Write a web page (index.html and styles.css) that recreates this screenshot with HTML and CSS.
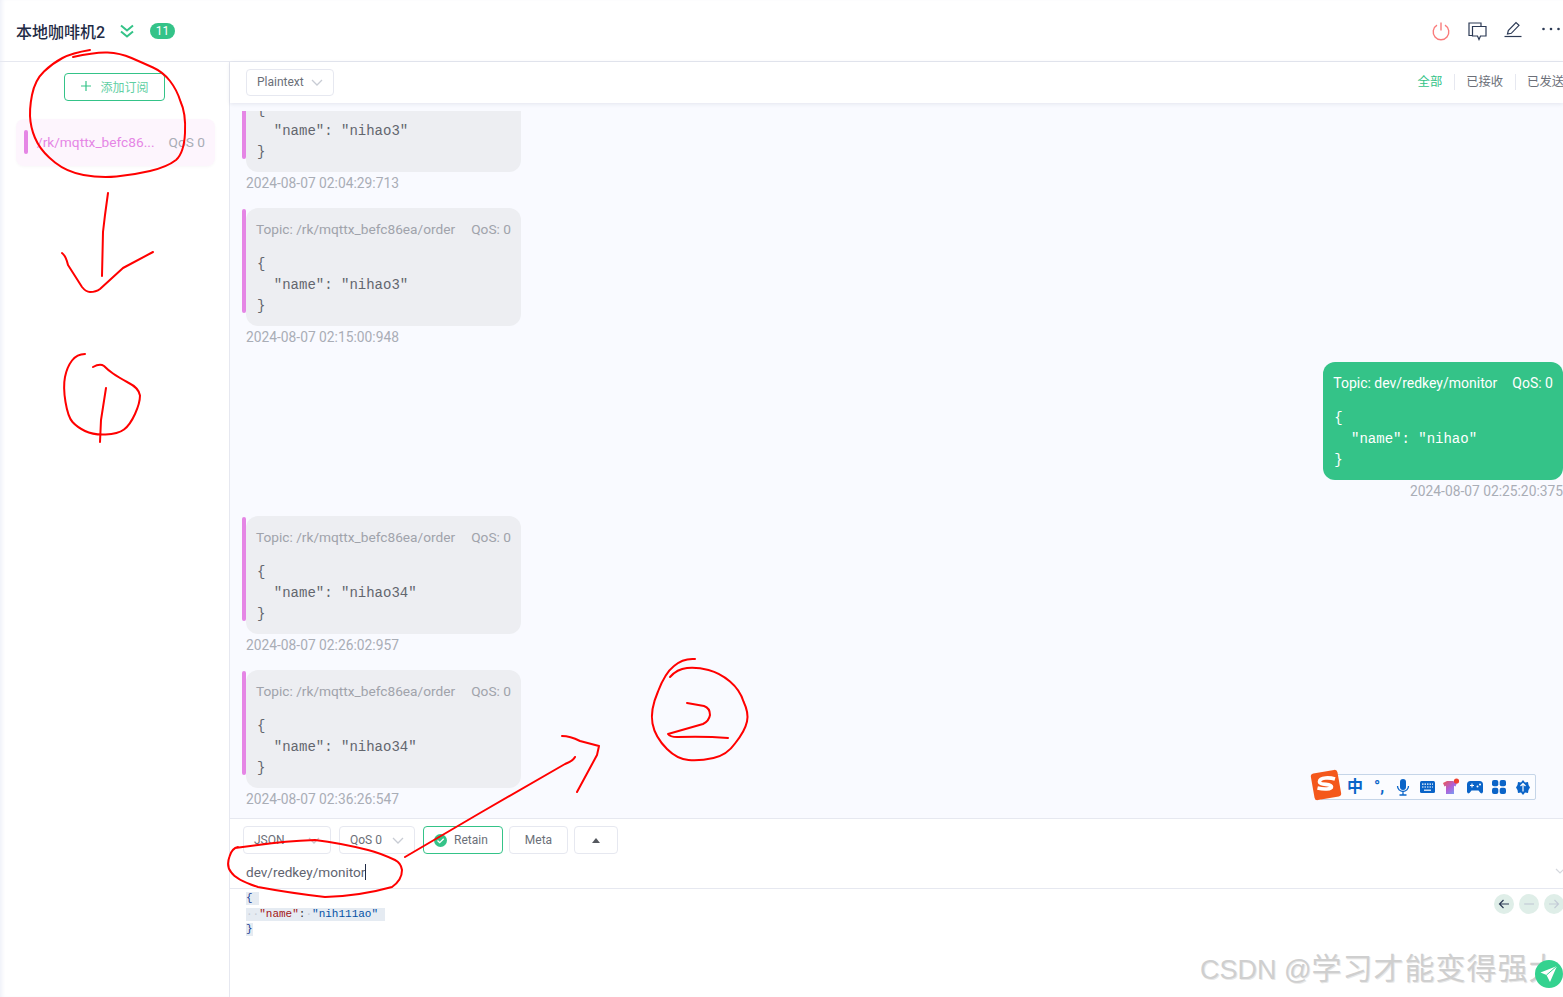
FILE: index.html
```html
<!DOCTYPE html>
<html lang="en">
<head>
    <meta charset="UTF-8">
    <meta name="viewport" content="width=device-width, initial-scale=1.0">
    <title>本地咖啡机2</title>
    <link rel="stylesheet" href="styles.css">
</head>
<body>
    <div class="app">
        <header class="topbar">
            <h1 class="conn-name">本地咖啡机2</h1>
            <svg class="conn-arrows" width="16" height="16" viewBox="0 0 16 16" fill="none" stroke="#34c388" stroke-width="2">
                <path d="M2 2.500l6 5 6-5"/>
                <path d="M2 8.500l6 5 6-5"/>
            </svg>
            <span class="badge">11</span>
            <div class="top-actions">
                <svg width="20" height="20" viewBox="0 0 20 20" fill="none" stroke="#fa7b7b" stroke-width="1.400">
                    <path d="M6 4.200a7.800 7.800 0 1 0 8 0"/>
                    <path d="M10 1.500v8"/>
                </svg>
                <svg width="20" height="20" viewBox="0 0 20 20" fill="none" stroke="#2c3a55" stroke-width="1.200">
                    <path d="M5.500 14.500H2V2h12v3"/>
                    <path d="M5.500 5.500H19v9.500h-5.500L12 18.500 10.500 15h-5z"/>
                </svg>
                <svg width="20" height="20" viewBox="0 0 20 20" fill="none" stroke="#2c3a55" stroke-width="1.200">
                    <path d="M4.500 13l.8-3.500 7.700-8 3 2.800-7.700 8z"/>
                    <path d="M1.500 15.500h17"/>
                </svg>
                <svg class="dots" width="20" height="20" viewBox="0 0 20 20" fill="#2c3a55">
                    <circle cx="2.500" cy="8" r="1.300"/>
                    <circle cx="10" cy="8" r="1.300"/>
                    <circle cx="17.500" cy="8" r="1.300"/>
                </svg>
            </div>
        </header>

        <div class="main">
            <aside class="sidebar">
                <button class="add-sub">
                    <svg width="12" height="12" viewBox="0 0 12 12" stroke="#34c388" stroke-width="1.200"><path d="M6 1v10M1 6h10"/></svg>
                    添加订阅
                </button>
                <div class="sub-item">
                    <span class="sub-bar"></span>
                    <span class="sub-topic">/rk/mqttx_befc86...</span>
                    <span class="sub-qos">QoS 0</span>
                </div>
            </aside>

            <section class="content">
                <div class="toolbar">
                    <div class="select select-plain">Plaintext
                        <svg class="chev" width="12" height="7" viewBox="0 0 12 7" fill="none" stroke="#c8ccd4" stroke-width="1.300"><path d="M1 1l5 5 5-5"/></svg>
                    </div>
                    <div class="tabs">
                        <span class="tab active">全部</span>
                        <span class="tab">已接收</span>
                        <span class="tab">已发送</span>
                    </div>
                </div>

                <div class="messages">
                    <div class="message-list">
                        <div class="msg">
                            <span class="msg-bar"></span>
                            <div class="bubble">
                                <div class="bubble-head"><span>Topic: /rk/mqttx_befc86ea/order</span><span>QoS: 0</span></div>
                                <pre class="payload">{
  "name": "nihao3"
}</pre>
                            </div>
                        </div>
                        <div class="time">2024-08-07 02:04:29:713</div>

                        <div class="msg">
                            <span class="msg-bar"></span>
                            <div class="bubble">
                                <div class="bubble-head"><span>Topic: /rk/mqttx_befc86ea/order</span><span>QoS: 0</span></div>
                                <pre class="payload">{
  "name": "nihao3"
}</pre>
                            </div>
                        </div>
                        <div class="time">2024-08-07 02:15:00:948</div>

                        <div class="msg msg-out">
                            <div class="bubble">
                                <div class="bubble-head"><span>Topic: dev/redkey/monitor</span><span>QoS: 0</span></div>
                                <pre class="payload">{
  "name": "nihao"
}</pre>
                            </div>
                        </div>
                        <div class="time time-out">2024-08-07 02:25:20:375</div>

                        <div class="msg">
                            <span class="msg-bar"></span>
                            <div class="bubble">
                                <div class="bubble-head"><span>Topic: /rk/mqttx_befc86ea/order</span><span>QoS: 0</span></div>
                                <pre class="payload">{
  "name": "nihao34"
}</pre>
                            </div>
                        </div>
                        <div class="time">2024-08-07 02:26:02:957</div>

                        <div class="msg">
                            <span class="msg-bar"></span>
                            <div class="bubble">
                                <div class="bubble-head"><span>Topic: /rk/mqttx_befc86ea/order</span><span>QoS: 0</span></div>
                                <pre class="payload">{
  "name": "nihao34"
}</pre>
                            </div>
                        </div>
                        <div class="time">2024-08-07 02:36:26:547</div>
                    </div>
                </div>

                <div class="composer">
                    <div class="composer-opts">
                        <div class="select select-json">JSON
                            <svg class="chev" width="12" height="7" viewBox="0 0 12 7" fill="none" stroke="#c8ccd4" stroke-width="1.300"><path d="M1 1l5 5 5-5"/></svg>
                        </div>
                        <div class="select select-qos">QoS 0
                            <svg class="chev" width="12" height="7" viewBox="0 0 12 7" fill="none" stroke="#c8ccd4" stroke-width="1.300"><path d="M1 1l5 5 5-5"/></svg>
                        </div>
                        <div class="opt-btn retain">
                            <svg width="13" height="13" viewBox="0 0 13 13"><circle cx="6.500" cy="6.500" r="6.500" fill="#34c388"/><path d="M3.500 6.500l2.200 2.200 4-4" fill="none" stroke="#fff" stroke-width="1.300"/></svg>
                            Retain
                        </div>
                        <div class="opt-btn meta">Meta</div>
                        <div class="opt-btn more"><span class="tri"></span></div>
                    </div>
                    <div class="topic-row">
                        <span class="topic-input">dev/redkey/monitor</span><span class="caret"></span>
                        <svg class="topic-chev" width="10" height="6" viewBox="0 0 10 6" fill="none" stroke="#d5d8de" stroke-width="1.200"><path d="M1 1l4 4 4-4"/></svg>
                    </div>
                    <div class="editor">
                        <pre class="code"><span class="sel"><span class="c-brace">{</span> </span>
<span class="sel"><span class="c-ws">··</span><span class="c-key">"name"</span><span class="c-punc">:</span><span class="c-ws">·</span><span class="c-str">"nih111ao"</span> </span>
<span class="sel"><span class="c-brace">}</span></span></pre>
                        <div class="nav-btns">
                            <span class="nav-btn"><svg width="12" height="12" viewBox="0 0 12 12" fill="none" stroke="#2c3a55" stroke-width="1.200"><path d="M11 6H1.500M5.500 2l-4 4 4 4"/></svg></span>
                            <span class="nav-btn"><svg width="12" height="12" viewBox="0 0 12 12" fill="none" stroke="#c3cbd6" stroke-width="1.200"><path d="M1 6h10"/></svg></span>
                            <span class="nav-btn"><svg width="12" height="12" viewBox="0 0 12 12" fill="none" stroke="#c3cbd6" stroke-width="1.200"><path d="M1 6h9.500M6.500 2l4 4-4 4"/></svg></span>
                        </div>
                    </div>
                </div>
            </section>
        </div>

        <!-- input method bar floating over the page -->
        <div class="ime">
            <svg class="ime-logo" width="34" height="34" viewBox="0 0 34 34">
                <rect x="3.500" y="3.500" width="27" height="27" rx="3" fill="#f4581c" transform="rotate(-10 17 17)"/>
                <path d="M26 11c-5-1.500-15-2-15.500 2.500-.4 4 12 1.800 12 5.200 0 2.800-8 2.800-14 1.400" fill="none" stroke="#fff" stroke-width="3.600"/>
            </svg>
            <span class="ime-cell ime-zh">中</span>
            <span class="ime-cell ime-punc">°,</span>
            <span class="ime-cell">
                <svg width="14" height="18" viewBox="0 0 14 18" fill="#0a64c8">
                    <rect x="4" y="1" width="6" height="11" rx="3"/>
                    <path d="M1.500 8a5.500 5.500 0 0 0 11 0M7 13.500V17M3.500 17h7" fill="none" stroke="#0a64c8" stroke-width="1.300"/>
                </svg>
            </span>
            <span class="ime-cell">
                <svg width="15" height="12" viewBox="0 0 15 12">
                    <rect width="15" height="12" rx="1.500" fill="#0a64c8"/>
                    <path d="M2 3.200h11M2 6h11" stroke="#fff" stroke-width="1.200" stroke-dasharray="1.500 1"/>
                    <path d="M4 9.200h7" stroke="#fff" stroke-width="1.200"/>
                </svg>
            </span>
            <span class="ime-cell">
                <svg width="18" height="18" viewBox="0 0 18 18">
                    <defs><linearGradient id="shirt" x1="0" y1="0" x2="1" y2="1"><stop offset="0" stop-color="#f0564a"/><stop offset=".5" stop-color="#b05fd8"/><stop offset="1" stop-color="#6ab0fa"/></linearGradient></defs>
                    <path d="M1 5l4-2h6l4 2-1.500 3.500-1.500-.7V16H4V7.800l-1.500.7z" fill="url(#shirt)"/>
                    <circle cx="14.500" cy="3" r="2.600" fill="#f0402f"/>
                </svg>
            </span>
            <span class="ime-cell">
                <svg width="16" height="14" viewBox="0 0 16 14" fill="#0a64c8">
                    <path d="M3.500 1h9A3.500 3.500 0 0 1 16 4.500V12l-1 1.500-1.500-.5-2-2.500h-7l-2 2.500-1.500.5L0 12V4.500A3.500 3.500 0 0 1 3.500 1z"/>
                    <path d="M3 5.500h4M5 3.500v4" stroke="#fff" stroke-width="1.100"/>
                    <circle cx="10.500" cy="6.500" r="1" fill="#fff"/>
                    <circle cx="13" cy="4.500" r="1" fill="#fff"/>
                </svg>
            </span>
            <span class="ime-cell">
                <svg width="14" height="14" viewBox="0 0 14 14" fill="#0a64c8">
                    <rect width="6.300" height="6.300" rx="2"/>
                    <rect x="7.700" width="6.300" height="6.300" rx="2"/>
                    <rect y="7.700" width="6.300" height="6.300" rx="2"/>
                    <rect x="7.700" y="7.700" width="6.300" height="6.300" rx="2"/>
                </svg>
            </span>
            <span class="ime-cell">
                <svg width="14" height="15" viewBox="0 0 14 15" fill="#0a64c8">
                    <path d="M7 0l2 2.500 3-.5.500 3 1.500 2.500-1.500 2.500-.5 3-3-.5L7 15l-2-2.500-3 .5-.5-3L0 7.500 1.500 5 2 2l3 .5z"/>
                    <path d="M7 3.500v8M4.500 6L7 3.500 9.500 6" fill="none" stroke="#fff" stroke-width="1.200"/>
                </svg>
            </span>
        </div>

        <div class="watermark">CSDN @<span class="wm-cjk">学习才能变得强大</span></div>

        <span class="send-btn">
            <svg width="20" height="20" viewBox="0 0 20 20" fill="#fff">
                <path d="M18 2L1.500 8.500l6 2.500 3.500 7z"/>
                <path d="M7.500 11L18 2" stroke="#34d28f" stroke-width="1"/>
            </svg>
        </span>

        <!-- red pen marks drawn over the screenshot -->
        <svg class="pen" width="1563" height="997" viewBox="0 0 1563 997" fill="none" stroke="#f00" stroke-width="2" stroke-linecap="round" stroke-linejoin="round">
            <path d="M90 50Q72 53 62.500 58Q53 63 44 71.500Q35 80 32 95Q29 110 30.500 121.500Q32 133 37.500 143Q43 153 55 162.500Q67 172 83.500 175Q100 178 116.500 176.500Q133 175 150 171Q167 167 176 160Q184 153 185 133Q186 113 180.500 101.500Q177 90 170 81Q163 72 153 67.500Q143 63 131.500 58Q120 53 107.500 52.500Q95 52 73 57"/>
            <path d="M108 193L105 215L103 232L102 276"/>
            <path d="M62 253Q66 256 68 265L82 287Q86 292 90 292Q96 292 100 289L123 268L153 252"/>
            <path d="M85 354Q77 354 72 360.500Q67 367 65 377Q63 387 65.500 402Q68 417 72.500 422Q77 427 85 431Q93 435 105.500 434.500Q118 434 124 429.500Q130 425 135 414Q140 403 140 395.500Q139 388 128 382.500Q118 377 113 373.500Q108 370 104 366Q100 363 93 367"/>
            <path d="M106 388L101 420L100 442"/>
            <path d="M695 659Q683 658 674 666Q665 673 658 691.500Q650 710 652.500 723.500Q655 737 667 749Q677 759 688.500 760Q700 761 713.500 758Q727 755 735 743.500Q745 731 747 721.500Q749 713 743.500 701.500Q740 690 730 681.500Q720 673 708.500 670Q697 667 687 668Q677 669 670 677"/>
            <path d="M687 703L704 706Q710 708 710 715Q709 721 703 724L668 734Q670 737 677 737Q705 736 728 738"/>
            <path d="M405 857L480 813L565 764Q573 761 575 757"/>
            <path d="M562 736Q570 736 580 741L599 746L597 755L577 792"/>
            <path d="M238 847Q232 848 229.500 856.500Q226 866 231 872Q236 880 258 887Q290 893 325 897Q360 896 392 887Q402 880 402 870Q401 863 395 860Q380 853 368 850Q340 843 315 840Q285 841 258 845L235 848"/>
        </svg>
    </div>
</body>
</html>
```

FILE: styles.css
```css
* {
    box-sizing: border-box;
}
body {
    margin: 0;
    font-family: Roboto, "Noto Sans CJK SC", sans-serif;
    color: #5f6470;
    background: #fff;
}
.app {
    position: relative;
    width: 1563px;
    height: 997px;
    overflow: hidden;
    display: flex;
    flex-direction: column;
    box-shadow: inset 4px 0 4px -2px #eef0f8;
}
.topbar {
    height: 62px;
    flex: none;
    display: flex;
    align-items: center;
    padding: 0 2px 0 16px;
    border-bottom: 1px solid #e6e8f0;
}
.conn-name {
    margin: 0;
    font-size: 16px;
    font-weight: 500;
    color: #1f2b45;
}
.conn-arrows {
    margin-left: 14px;
}
.badge {
    margin-left: 15px;
    width: 25px;
    height: 16px;
    border-radius: 8px;
    background: #34c388;
    color: #fff;
    font-size: 12px;
    line-height: 17px;
    text-align: center;
}
.top-actions {
    margin-left: auto;
    display: flex;
    gap: 16px;
}
.dots {
    margin-left: 2px;
}
.main {
    flex: 1;
    min-height: 0;
    display: flex;
}
.sidebar {
    width: 230px;
    flex: none;
    padding: 11px 14px 0 16px;
    border-right: 1px solid #e6e8f0;
}
.add-sub {
    display: flex;
    align-items: center;
    justify-content: center;
    gap: 8px;
    width: 101px;
    height: 28px;
    margin: 0 0 18px 48px;
    padding: 0 0 2px;
    background: #fff;
    border: 1px solid #34c388;
    border-radius: 4px;
    color: #5fcfa3;
    font-family: inherit;
    font-size: 12px;
}
.sub-item {
    display: flex;
    align-items: center;
    height: 47px;
    padding: 0 10px 1px 8px;
    background: #fdf5fd;
    border-radius: 8px;
    box-shadow: 0 1px 3px rgba(0,0,0,0.03);
    font-size: 13.700px;
}
.sub-bar {
    width: 4px;
    height: 24px;
    border-radius: 2px;
    background: #e586e5;
}
.sub-topic {
    margin-left: 9px;
    color: #e586e5;
}
.sub-qos {
    margin-left: auto;
    color: #a9adb6;
}
.content {
    flex: 1;
    min-width: 0;
    display: flex;
    flex-direction: column;
    background: #f9faff;
}
.toolbar {
    height: 41px;
    flex: none;
    display: flex;
    align-items: center;
    justify-content: space-between;
    padding: 0 0 1px 16px;
    background: #fff;
    box-shadow: 0 1px 4px rgba(40,50,90,0.1);
    position: relative;
}
.select {
    display: flex;
    align-items: center;
    justify-content: space-between;
    height: 28px;
    padding: 0 10px;
    background: #fff;
    border: 1px solid #e6e8f0;
    border-radius: 4px;
    font-size: 12px;
    color: #6b6f78;
}
.select-plain {
    width: 88px;
    height: 27px;
}
.select-json {
    width: 88px;
}
.select-qos {
    width: 76px;
}
.tabs {
    display: flex;
    font-size: 12.300px;
    margin-right: -1px;
}
.tab {
    padding: 0 12px 0 11px;
    color: #6b6f78;
    border-left: 1px solid #e6e8f0;
    height: 16px;
    line-height: 16px;
    white-space: nowrap;
}
.tab:last-child {
    padding-right: 0;
}
.tab.active {
    color: #34c388;
    border-left: 0;
}
.messages {
    flex: 1;
    min-height: 0;
    margin-top: 8px;
    overflow: hidden;
}
.message-list {
    margin-top: -57px;
    padding-left: 12px;
}
.msg {
    display: flex;
}
.msg-out {
    justify-content: flex-end;
}
.msg-bar {
    width: 4px;
    height: 104px;
    margin-top: 1px;
    border-radius: 2px;
    background: #e586e5;
}
.bubble {
    height: 118px;
    padding: 12px 10px 0;
    background: #edeef2;
    border-radius: 12px;
    color: #a0a3ab;
}
.msg-out .bubble {
    background: #34c388;
    color: #fff;
}
.bubble-head {
    display: flex;
    justify-content: space-between;
    gap: 16px;
    font-size: 13.700px;
    line-height: 18px;
    white-space: nowrap;
}
.msg-out .bubble-head {
    font-size: 14px;
    gap: 15px;
}
.payload {
    margin: 16px 0 0;
    padding-left: 1px;
    font-family: "Liberation Mono", monospace;
    font-size: 14px;
    line-height: 21px;
    color: #63666e;
}
.msg-out .payload {
    color: #fff;
}
.time {
    height: 36px;
    padding: 1px 0 0 4px;
    font-size: 13.800px;
    line-height: 20px;
    color: #a9adb6;
    white-space: nowrap;
}
.time-out {
    text-align: right;
}
.composer {
    height: 179px;
    flex: none;
    background: #fff;
    border-top: 1px solid #e6e8f0;
}
.composer-opts {
    display: flex;
    align-items: center;
    gap: 8px;
    padding: 7px 0 0 13px;
}
.opt-btn {
    display: flex;
    align-items: center;
    justify-content: center;
    gap: 7px;
    height: 28px;
    background: #fff;
    border: 1px solid #e6e8f0;
    border-radius: 4px;
    font-size: 12px;
    color: #6b6f78;
}
.retain {
    width: 80px;
    justify-content: flex-start;
    padding-left: 10px;
    border-color: #34c388;
}
.meta {
    width: 59px;
    margin-left: -2px;
}
.more {
    width: 44px;
    margin-left: -2px;
}
.tri {
    width: 0;
    height: 0;
    border-left: 4px solid transparent;
    border-right: 4px solid transparent;
    border-bottom: 5px solid #55585f;
}
.topic-row {
    position: relative;
    height: 35px;
    display: flex;
    align-items: center;
    padding: 2px 0 0 16px;
    border-bottom: 1px solid #e6e8f0;
}
.topic-input {
    font-size: 13.600px;
    color: #5f6470;
}
.caret {
    width: 1px;
    height: 16px;
    background: #1f2b45;
}
.topic-chev {
    position: absolute;
    right: -2px;
    top: 14px;
}
.editor {
    display: flex;
    justify-content: space-between;
    align-items: flex-start;
    padding: 2px 0 0 16px;
}
.code {
    margin: 0;
    font-family: "Liberation Mono", monospace;
    font-size: 11px;
    line-height: 15.500px;
}
.sel {
    background: #e5ebf2;
    padding-bottom: 1px;
}
.c-brace {
    color: #1c3f94;
}
.c-ws {
    color: #c5ccd6;
}
.c-key {
    color: #a31515;
}
.c-punc {
    color: #333;
}
.c-str {
    color: #0451a5;
}
.nav-btns {
    display: flex;
    gap: 5px;
    margin: 3px -1px 0 0;
}
.nav-btn {
    display: flex;
    align-items: center;
    justify-content: center;
    width: 20px;
    height: 20px;
    border-radius: 50%;
    background: #dfeee8;
}
.ime {
    position: absolute;
    left: 1320px;
    top: 774px;
    width: 216px;
    height: 26px;
    display: flex;
    align-items: center;
    padding-left: 22px;
    background: #fbfcff;
    border: 1px solid #c5d5e8;
    border-radius: 2px;
}
.ime-logo {
    position: absolute;
    left: -12px;
    top: -7px;
}
.ime-cell {
    width: 24px;
    flex: none;
    display: flex;
    align-items: center;
    justify-content: center;
    color: #0a64c8;
    font-size: 16px;
    font-weight: 700;
    line-height: 16px;
}
.watermark {
    position: absolute;
    left: 1200px;
    top: 950px;
    font-family: "Liberation Sans", "Noto Sans CJK SC", sans-serif;
    font-size: 27px;
    line-height: 38px;
    color: #cfcfcf;
    text-shadow: 1px 1px 0 #e8e8e8;
    white-space: nowrap;
}
.wm-cjk {
    font-size: 30px;
    letter-spacing: 1px;
}
.send-btn {
    position: absolute;
    left: 1535px;
    top: 960px;
    width: 28px;
    height: 28px;
    display: flex;
    align-items: center;
    justify-content: center;
    border-radius: 50%;
    background: #34d28f;
}
.pen {
    position: absolute;
    left: 0;
    top: 0;
    pointer-events: none;
}
```
